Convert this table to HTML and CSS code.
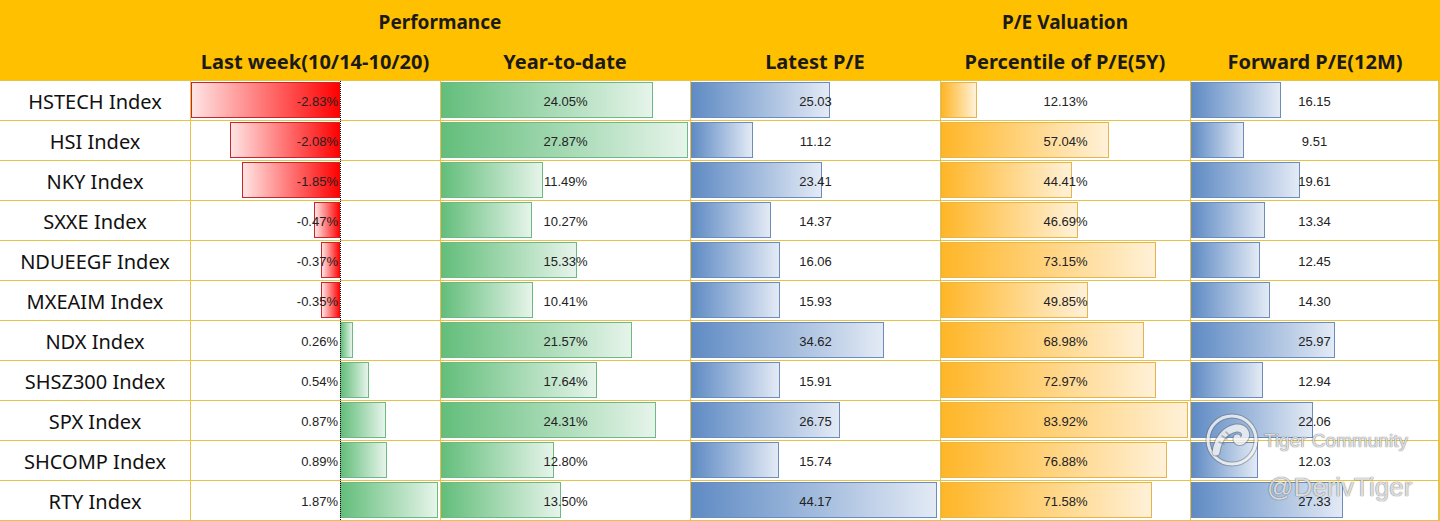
FILE: index.html
```html
<!DOCTYPE html>
<html>
<head>
<meta charset="utf-8">
<link rel="stylesheet" href="styles.css">
</head>
<body>
<div class="sheet">
  <div class="head">
    <div class="h1 g-perf">Performance</div>
    <div class="h1 g-pe">P/E Valuation</div>
    <div class="h2 c2">Last week(10/14-10/20)</div>
    <div class="h2 c3">Year-to-date</div>
    <div class="h2 c4">Latest P/E</div>
    <div class="h2 c5">Percentile of P/E(5Y)</div>
    <div class="h2 c6">Forward P/E(12M)</div>
  </div>

  <div class="row">
    <div class="name">HSTECH Index</div>
    <div class="c wk"><div class="bar neg" style="width:149px"></div><div class="axis"></div><div class="wv">-2.83%</div></div>
    <div class="c"><div class="bar green" style="width:212px"></div><div class="val">24.05%</div></div>
    <div class="c"><div class="bar blue" style="width:139px"></div><div class="val">25.03</div></div>
    <div class="c"><div class="bar orange" style="width:36px"></div><div class="val">12.13%</div></div>
    <div class="c last"><div class="bar blue" style="width:90px"></div><div class="val">16.15</div></div>
  </div>
  <div class="row">
    <div class="name">HSI Index</div>
    <div class="c wk"><div class="bar neg" style="width:110px"></div><div class="axis"></div><div class="wv">-2.08%</div></div>
    <div class="c"><div class="bar green" style="width:247px"></div><div class="val">27.87%</div></div>
    <div class="c"><div class="bar blue" style="width:62px"></div><div class="val">11.12</div></div>
    <div class="c"><div class="bar orange" style="width:168px"></div><div class="val">57.04%</div></div>
    <div class="c last"><div class="bar blue" style="width:53px"></div><div class="val">9.51</div></div>
  </div>
  <div class="row">
    <div class="name">NKY Index</div>
    <div class="c wk"><div class="bar neg" style="width:98px"></div><div class="axis"></div><div class="wv">-1.85%</div></div>
    <div class="c"><div class="bar green" style="width:102px"></div><div class="val">11.49%</div></div>
    <div class="c"><div class="bar blue" style="width:131px"></div><div class="val">23.41</div></div>
    <div class="c"><div class="bar orange" style="width:131px"></div><div class="val">44.41%</div></div>
    <div class="c last"><div class="bar blue" style="width:109px"></div><div class="val">19.61</div></div>
  </div>
  <div class="row">
    <div class="name">SXXE Index</div>
    <div class="c wk"><div class="bar neg" style="width:26px"></div><div class="axis"></div><div class="wv">-0.47%</div></div>
    <div class="c"><div class="bar green" style="width:91px"></div><div class="val">10.27%</div></div>
    <div class="c"><div class="bar blue" style="width:80px"></div><div class="val">14.37</div></div>
    <div class="c"><div class="bar orange" style="width:137px"></div><div class="val">46.69%</div></div>
    <div class="c last"><div class="bar blue" style="width:74px"></div><div class="val">13.34</div></div>
  </div>
  <div class="row">
    <div class="name">NDUEEGF Index</div>
    <div class="c wk"><div class="bar neg" style="width:19px"></div><div class="axis"></div><div class="wv">-0.37%</div></div>
    <div class="c"><div class="bar green" style="width:136px"></div><div class="val">15.33%</div></div>
    <div class="c"><div class="bar blue" style="width:89px"></div><div class="val">16.06</div></div>
    <div class="c"><div class="bar orange" style="width:215px"></div><div class="val">73.15%</div></div>
    <div class="c last"><div class="bar blue" style="width:69px"></div><div class="val">12.45</div></div>
  </div>
  <div class="row">
    <div class="name">MXEAIM Index</div>
    <div class="c wk"><div class="bar neg" style="width:19px"></div><div class="axis"></div><div class="wv">-0.35%</div></div>
    <div class="c"><div class="bar green" style="width:92px"></div><div class="val">10.41%</div></div>
    <div class="c"><div class="bar blue" style="width:89px"></div><div class="val">15.93</div></div>
    <div class="c"><div class="bar orange" style="width:147px"></div><div class="val">49.85%</div></div>
    <div class="c last"><div class="bar blue" style="width:79px"></div><div class="val">14.30</div></div>
  </div>
  <div class="row">
    <div class="name">NDX Index</div>
    <div class="c wk"><div class="bar pos" style="width:13px"></div><div class="axis"></div><div class="wv">0.26%</div></div>
    <div class="c"><div class="bar green" style="width:191px"></div><div class="val">21.57%</div></div>
    <div class="c"><div class="bar blue" style="width:193px"></div><div class="val">34.62</div></div>
    <div class="c"><div class="bar orange" style="width:203px"></div><div class="val">68.98%</div></div>
    <div class="c last"><div class="bar blue" style="width:144px"></div><div class="val">25.97</div></div>
  </div>
  <div class="row">
    <div class="name">SHSZ300 Index</div>
    <div class="c wk"><div class="bar pos" style="width:29px"></div><div class="axis"></div><div class="wv">0.54%</div></div>
    <div class="c"><div class="bar green" style="width:156px"></div><div class="val">17.64%</div></div>
    <div class="c"><div class="bar blue" style="width:89px"></div><div class="val">15.91</div></div>
    <div class="c"><div class="bar orange" style="width:215px"></div><div class="val">72.97%</div></div>
    <div class="c last"><div class="bar blue" style="width:72px"></div><div class="val">12.94</div></div>
  </div>
  <div class="row">
    <div class="name">SPX Index</div>
    <div class="c wk"><div class="bar pos" style="width:46px"></div><div class="axis"></div><div class="wv">0.87%</div></div>
    <div class="c"><div class="bar green" style="width:215px"></div><div class="val">24.31%</div></div>
    <div class="c"><div class="bar blue" style="width:149px"></div><div class="val">26.75</div></div>
    <div class="c"><div class="bar orange" style="width:247px"></div><div class="val">83.92%</div></div>
    <div class="c last"><div class="bar blue" style="width:122px"></div><div class="val">22.06</div></div>
  </div>
  <div class="row">
    <div class="name">SHCOMP Index</div>
    <div class="c wk"><div class="bar pos" style="width:47px"></div><div class="axis"></div><div class="wv">0.89%</div></div>
    <div class="c"><div class="bar green" style="width:113px"></div><div class="val">12.80%</div></div>
    <div class="c"><div class="bar blue" style="width:88px"></div><div class="val">15.74</div></div>
    <div class="c"><div class="bar orange" style="width:226px"></div><div class="val">76.88%</div></div>
    <div class="c last"><div class="bar blue" style="width:67px"></div><div class="val">12.03</div></div>
  </div>
  <div class="row lastrow">
    <div class="name">RTY Index</div>
    <div class="c wk"><div class="bar pos" style="width:98px"></div><div class="axis"></div><div class="wv">1.87%</div></div>
    <div class="c"><div class="bar green" style="width:120px"></div><div class="val">13.50%</div></div>
    <div class="c"><div class="bar blue" style="width:246px"></div><div class="val">44.17</div></div>
    <div class="c"><div class="bar orange" style="width:211px"></div><div class="val">71.58%</div></div>
    <div class="c last"><div class="bar blue" style="width:152px"></div><div class="val">27.33</div></div>
  </div>

  <div class="wm">
    <svg class="wm-logo" width="56" height="56" viewBox="0 0 56 56">
      <g fill="none" stroke-linecap="round">
        <circle cx="28" cy="28" r="24" stroke="rgba(90,90,90,0.45)" stroke-width="5"/>
        <circle cx="28" cy="28" r="24" stroke="rgba(255,255,255,0.85)" stroke-width="3"/>
        <path d="M12 40 C14 26 22 18 32 16 C40 15 44 22 40 27 C37 31 32 30 33 26" stroke="rgba(90,90,90,0.45)" stroke-width="9"/>
        <path d="M12 40 C14 26 22 18 32 16 C40 15 44 22 40 27 C37 31 32 30 33 26" stroke="rgba(255,255,255,0.85)" stroke-width="7"/>
        <path d="M15 30 L20 32 M18 24 L23 27 M22 20 L26 24" stroke="rgba(120,120,120,0.55)" stroke-width="1.5"/>
      </g>
    </svg>
    <div class="wm-t1">Tiger Community</div>
    <div class="wm-t2">@DerivTiger</div>
  </div>
</div>
</body>
</html>
```
FILE: styles.css
```css
html, body {
  margin: 0;
  padding: 0;
  background: #ffffff;
}

.sheet {
  position: relative;
  width: 1440px;
  height: 521px;
  overflow: hidden;
  font-family: "Liberation Sans", Arial, sans-serif;
}

.head {
  height: 80px;
  background: #FFC000;
  display: grid;
  grid-template-columns: 190px repeat(5, 250px);
  grid-template-rows: 40px 40px;
  font-family: "Noto Sans", "Open Sans", sans-serif;
  font-weight: 700;
  font-size: 19px;
  color: #1a1a1a;
}

.h1, .h2 {
  display: flex;
  align-items: center;
  justify-content: center;
  padding-top: 3px;
  box-sizing: border-box;
}

.h1 { grid-row: 1; }
.h2 { grid-row: 2; font-size: 20px; }
.g-perf { grid-column: 2 / 4; }
.g-pe { grid-column: 4 / 7; }
.c2 { grid-column: 2; }
.c3 { grid-column: 3; }
.c4 { grid-column: 4; }
.c5 { grid-column: 5; }
.c6 { grid-column: 6; }

.row {
  display: grid;
  grid-template-columns: 190px repeat(5, 250px);
  height: 40px;
  box-sizing: border-box;
  border-top: 1px solid #E4C346;
}

.lastrow {
  height: 41px;
  border-bottom: 1px solid #E4C346;
}

.name {
  display: flex;
  align-items: center;
  justify-content: center;
  font-family: "Noto Sans", "Open Sans", sans-serif;
  font-size: 20px;
  color: #111;
  padding-top: 1px;
}

.c {
  display: grid;
  grid-template-columns: 1fr;
  grid-template-rows: 39px;
  border-left: 1px solid #E4C346;
  font-size: 13px;
  color: #222;
}

.c.last {
  border-right: 2px solid #E4C346;
}

.bar {
  grid-area: 1 / 1;
  align-self: start;
  justify-self: start;
  margin-top: 1px;
  height: 36px;
  box-sizing: border-box;
  border: 1px solid;
}

.green {
  background: linear-gradient(to right, #63BE7B, #E6F4EA);
  border-color: #6FB884;
}

.blue {
  background: linear-gradient(to right, #5F8BC4, #E3EAF5);
  border-color: #6C8CBB;
}

.orange {
  background: linear-gradient(to right, #FFB628, #FFF1D8);
  border-color: #E8B44A;
}

.val {
  grid-area: 1 / 1;
  align-self: center;
  justify-self: center;
  padding-top: 1px;
}

/* Last-week column with a zero axis */
.c.wk {
  grid-template-columns: 149px 1fr;
}

.neg {
  grid-column: 1;
  justify-self: end;
  background: linear-gradient(to right, #FFE4E4, #FF0000);
  border-color: #C8262A;
  border-right: none;
}

.pos {
  grid-column: 2;
  justify-self: start;
  background: linear-gradient(to right, #63BE7B, #E6F4EA);
  border-color: #6FB884;
}

.axis {
  grid-column: 2;
  grid-row: 1;
  justify-self: start;
  width: 0;
  border-left: 1px dotted #000;
}

.wv {
  grid-column: 1;
  grid-row: 1;
  align-self: center;
  justify-self: end;
  padding-right: 2px;
  padding-top: 1px;
}

/* Watermark overlay */
.wm {
  position: absolute;
  left: 1204px;
  top: 412px;
  width: 236px;
  height: 109px;
  display: grid;
  grid-template-columns: 60px 1fr;
  grid-template-rows: 56px 1fr;
}

.wm-logo {
  grid-column: 1;
  grid-row: 1;
  opacity: 0.9;
}

.wm-t1 {
  grid-column: 2;
  grid-row: 1;
  align-self: center;
  font-family: "Liberation Sans", Arial, sans-serif;
  font-size: 19px;
  color: rgba(255,255,255,0.8);
  text-shadow: 0 0 1px rgba(60,60,60,0.7), 0 0 1px rgba(60,60,60,0.5);
  padding-top: 2px;
}

.wm-t2 {
  grid-column: 1 / 3;
  grid-row: 2;
  padding-left: 63px;
  padding-top: 4px;
  font-family: "Liberation Sans", Arial, sans-serif;
  font-size: 26px;
  color: rgba(255,255,255,0.8);
  text-shadow: 0 0 1px rgba(60,60,60,0.7), 0 0 1px rgba(60,60,60,0.5);
}
```
